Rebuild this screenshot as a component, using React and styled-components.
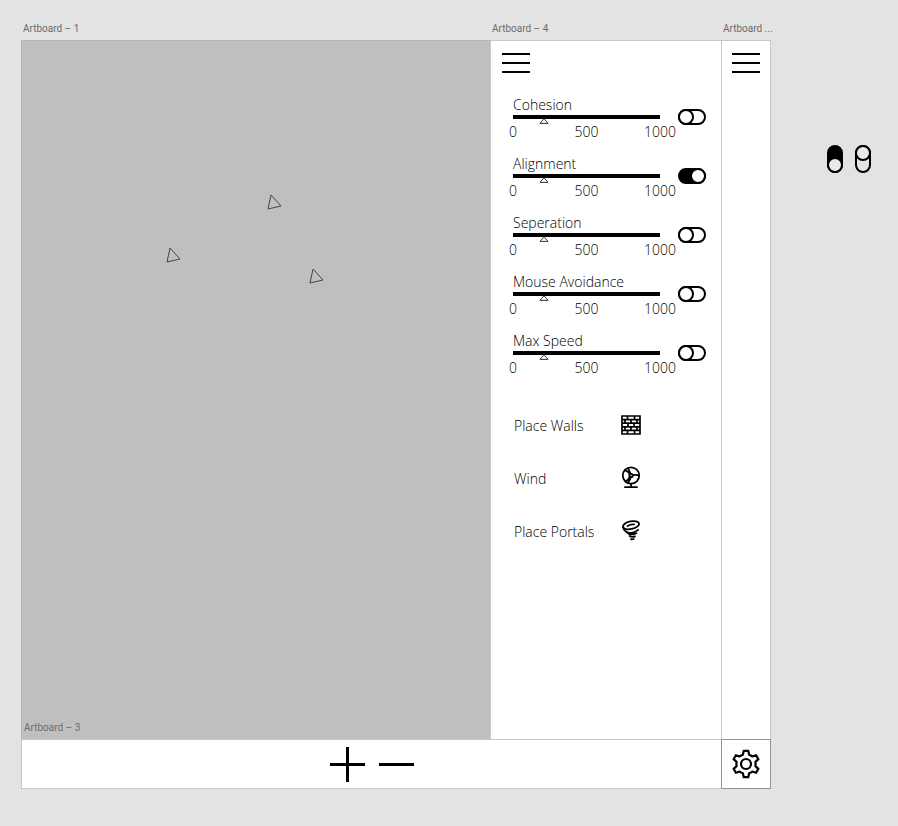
import React, { useState } from "react";
import styled, { createGlobalStyle, css } from "styled-components";

const Global = createGlobalStyle`
  *, *::before, *::after { box-sizing: border-box; }
  body {
    margin: 0;
    background: #e3e3e3;
    color: #000;
    font-family: "Open Sans", "Noto Sans", sans-serif;
    font-size: 14px;
    font-weight: 300;
  }
  svg { display: block; }
`;

const Page = styled.div`
  display: flex;
  min-height: 100vh;
  padding: 20px 0 37px 21px;
`;

const Workspace = styled.main`
  flex: 1;
  min-width: 0;
  display: grid;
  grid-template-columns: minmax(0, 1fr) 231px 50px;
  grid-template-rows: 20px minmax(0, 1fr) 50px;
`;

const BoardTitle = styled.h2`
  margin: 0;
  padding-left: 2px;
  white-space: nowrap;
  color: #6c6c6c;
  font-family: Roboto, sans-serif;
  font-size: 10px;
  line-height: 18px;
  font-weight: 400;
`;

const SimulationBoard = styled.section`
  display: flex;
  flex-direction: column;
  justify-content: flex-end;
  position: relative;
  background: #bfbfbf;
  border: 1px solid #b5b5b5;
  border-width: 1px 0 0 1px;
  padding-bottom: 2px;
`;

const Boid = styled.svg`
  position: absolute;
  left: ${(p) => p.$x}px;
  top: ${(p) => p.$y}px;
`;

const Panel = styled.section`
  background: #fff;
  border: 1px solid #c8c8c8;
  border-width: 1px 0 0 1px;
  padding: 8px 14px 0 8px;
`;

const NarrowPanel = styled(Panel)`
  border-right-width: 1px;
  padding: 8px 0 0 7px;
`;

const IconButton = styled.button`
  display: flex;
  align-items: center;
  justify-content: center;
  padding: 0;
  border: 0;
  background: none;
  color: #000;
  cursor: pointer;
`;

const MenuButton = styled(IconButton)`
  width: 33px;
  height: 28px;
`;

const SliderList = styled.div`
  display: flex;
  flex-direction: column;
  gap: 15px;
  padding: 19px 0 0 14px;
`;

const SliderRow = styled.div`
  display: grid;
  grid-template-columns: 147px 28px;
  column-gap: 18px;
`;

const SliderLabel = styled.label`
  display: block;
  height: 19px;
  line-height: 18px;
`;

const triangle =
  "url(\"data:image/svg+xml,%3Csvg xmlns='http://www.w3.org/2000/svg' width='10' height='6'%3E%3Cpath d='M5 .7 9 5.4H1Z' fill='white' stroke='%23333'/%3E%3C/svg%3E\")";

const Range = styled.input`
  appearance: none;
  display: block;
  width: 100%;
  height: 9px;
  margin: 0;
  background: linear-gradient(#000 0 4px, transparent 4px);
  &::-webkit-slider-thumb {
    appearance: none;
    width: 10px;
    height: 6px;
    margin-top: 2px;
    background: ${triangle} no-repeat;
  }
`;

const Scale = styled.div`
  display: flex;
  justify-content: space-between;
  height: 16px;
  line-height: 16px;
`;

const Tick = styled.span`
  display: flex;
  justify-content: center;
  width: 0;
`;

const Switch = styled.input`
  appearance: none;
  width: 28px;
  height: 16px;
  margin: 13px 0 0;
  border: 2px solid #000;
  border-radius: 8px;
  background: #fff;
  cursor: pointer;
  &::before {
    content: "";
    display: block;
    width: 16px;
    height: 16px;
    margin: -2px;
    border: 2px solid #000;
    border-radius: 50%;
    background: #fff;
  }
  &:checked {
    background: #000;
  }
  &:checked::before {
    margin-left: 10px;
  }
  ${(p) =>
    p.$vertical &&
    css`
      width: 16px;
      height: 28px;
      margin: 0;
      background: transparent;
      &::before,
      &:checked::before {
        margin: -2px;
        background: #e9e9e9;
      }
      &:checked::before {
        margin-top: 10px;
      }
    `}
`;

const ToolList = styled.div`
  display: flex;
  flex-direction: column;
  gap: 23px;
  padding: 34px 0 0 15px;
`;

const Tool = styled.button`
  display: grid;
  grid-template-columns: 106px 22px;
  align-items: center;
  width: 100%;
  height: 30px;
  padding: 0;
  border: 0;
  background: none;
  color: inherit;
  font: inherit;
  text-align: left;
  cursor: pointer;
`;

const BottomBar = styled.section`
  grid-column: span 2;
  display: flex;
  align-items: center;
  justify-content: center;
  gap: 14px;
  background: #fff;
  border: 1px solid #c8c8c8;
  border-right: 0;
`;

const SettingsBoard = styled.section`
  display: flex;
  align-items: center;
  justify-content: center;
  background: #fff;
  border: 1px solid #949494;
`;

const Pasteboard = styled.aside`
  flex: 0 0 127px;
  display: flex;
  align-items: flex-start;
  justify-content: center;
  gap: 12px;
  padding: 125px 0 0 28px;
`;

const MenuIcon = () => (
  <svg width="28" height="22" viewBox="0 0 28 22" stroke="currentColor" strokeWidth="2" aria-hidden="true">
    <path d="M0 2h28M0 11h28M0 20h28" />
  </svg>
);

const PlusIcon = () => (
  <svg width="35" height="35" viewBox="0 0 35 35" stroke="currentColor" strokeWidth="3" aria-hidden="true">
    <path d="M0 17.5h35M17.5 0v35" />
  </svg>
);

const MinusIcon = () => (
  <svg width="35" height="35" viewBox="0 0 35 35" stroke="currentColor" strokeWidth="3" aria-hidden="true">
    <path d="M0 17.5h35" />
  </svg>
);

const GearIcon = () => (
  <svg width="30" height="30" viewBox="0 0 30 30" fill="none" stroke="currentColor" strokeWidth="2.2" strokeLinejoin="round" aria-hidden="true">
    <path d="M12.7 1.8h4.6l.8 3.9q1.8.6 3.2 1.8l3.8-1.3 2.3 4-3 2.6q.4 2.2 0 4.4l3 2.6-2.3 4-3.8-1.3q-1.4 1.2-3.2 1.8l-.8 3.9h-4.6l-.8-3.9q-1.8-.6-3.2-1.8l-3.8 1.3-2.3-4 3-2.6q-.4-2.2 0-4.4l-3-2.6 2.3-4 3.8 1.3q1.4-1.2 3.2-1.8Z" />
    <circle cx="15" cy="15" r="5" />
  </svg>
);

const WallIcon = () => (
  <svg width="22" height="22" viewBox="0 0 22 22" fill="none" stroke="currentColor" strokeWidth="1.7" aria-hidden="true">
    <path d="M2 2h18v18H2ZM2 5.6h18M2 9.2h18M2 12.8h18M2 16.4h18M7.5 2v3.6M14.5 2v3.6M5 5.6v3.6M11 5.6v3.6M17 5.6v3.6M8 9.2v3.6M14 9.2v3.6M5 12.8v3.6M11 12.8v3.6M17 12.8v3.6M7.5 16.4V20M14.5 16.4V20" />
  </svg>
);

const FanIcon = () => (
  <svg width="22" height="24" viewBox="0 0 22 24" fill="none" stroke="currentColor" strokeWidth="1.8" strokeLinecap="round" aria-hidden="true">
    <circle cx="11" cy="9.5" r="8.2" />
    <circle cx="11" cy="9.5" r="1.7" />
    <path d="M9.8 8.2Q8.6 5.6 5 4.2M10.4 7.8Q9.6 5 8.2 2.6M12.8 9.2Q15.5 8.6 19 9.4M9.8 10.8Q8.6 13.8 5.6 15.4M10.8 11.2Q10 14.2 8.2 16.4M11 18v3M5 21.2h12" />
  </svg>
);

const TornadoIcon = () => (
  <svg width="22" height="22" viewBox="0 0 22 22" fill="none" stroke="currentColor" strokeWidth="1.8" strokeLinecap="round" aria-hidden="true">
    <ellipse cx="11" cy="5.2" rx="8.2" ry="3.8" transform="rotate(-12 11 5.2)" />
    <path d="M7.5 6q3-1.8 6.5-1.6M3 7.5q2 5.8 8 5.4 4-.4 7.2-3M7.5 13q3.5 2.6 9 .2M9.5 16q2.5 1.6 5.5.4M11 19.2q1.5.4 2.6-.2" />
  </svg>
);

const boids = [
  { x: 245, y: 153 },
  { x: 144, y: 206 },
  { x: 287, y: 227 },
];

const forces = [
  { name: "Cohesion" },
  { name: "Alignment", on: true },
  { name: "Seperation" },
  { name: "Mouse Avoidance" },
  { name: "Max Speed" },
];

const tools = [
  { name: "Place Walls", Icon: WallIcon },
  { name: "Wind", Icon: FanIcon },
  { name: "Place Portals", Icon: TornadoIcon },
];

function ForceSlider({ name, on = false }) {
  const [value, setValue] = useState(190);
  const id = name.toLowerCase().replace(" ", "-");
  return (
    <SliderRow>
      <div>
        <SliderLabel htmlFor={id}>{name}</SliderLabel>
        <Range id={id} type="range" min="0" max="1000" value={value} onChange={(e) => setValue(Number(e.target.value))} />
        <Scale>
          <Tick>0</Tick>
          <Tick>500</Tick>
          <Tick>1000</Tick>
        </Scale>
      </div>
      <Switch type="checkbox" defaultChecked={on} aria-label={`Enable ${name}`} />
    </SliderRow>
  );
}

export default function App() {
  return (
    <>
      <Global />
      <Page>
        <Workspace>
          <BoardTitle>Artboard – 1</BoardTitle>
          <BoardTitle>Artboard – 4</BoardTitle>
          <BoardTitle>Artboard ...</BoardTitle>
          <SimulationBoard>
            {boids.map((b) => (
              <Boid key={b.x} $x={b.x} $y={b.y} width="16" height="17" viewBox="0 0 16 17" fill="none" stroke="#444" aria-hidden="true">
                <path d="M4 1 14 12 1 15Z" />
              </Boid>
            ))}
            <BoardTitle>Artboard – 3</BoardTitle>
          </SimulationBoard>
          <Panel>
            <MenuButton aria-label="Close menu">
              <MenuIcon />
            </MenuButton>
            <SliderList>
              {forces.map((f) => (
                <ForceSlider key={f.name} {...f} />
              ))}
            </SliderList>
            <ToolList>
              {tools.map(({ name, Icon }) => (
                <Tool key={name}>
                  {name}
                  <Icon />
                </Tool>
              ))}
            </ToolList>
          </Panel>
          <NarrowPanel>
            <MenuButton aria-label="Open menu">
              <MenuIcon />
            </MenuButton>
          </NarrowPanel>
          <BottomBar>
            <IconButton aria-label="Add">
              <PlusIcon />
            </IconButton>
            <IconButton aria-label="Remove">
              <MinusIcon />
            </IconButton>
          </BottomBar>
          <SettingsBoard>
            <IconButton aria-label="Settings">
              <GearIcon />
            </IconButton>
          </SettingsBoard>
        </Workspace>
        <Pasteboard>
          <Switch $vertical type="checkbox" defaultChecked aria-label="Switch on" />
          <Switch $vertical type="checkbox" aria-label="Switch off" />
        </Pasteboard>
      </Page>
    </>
  );
}
